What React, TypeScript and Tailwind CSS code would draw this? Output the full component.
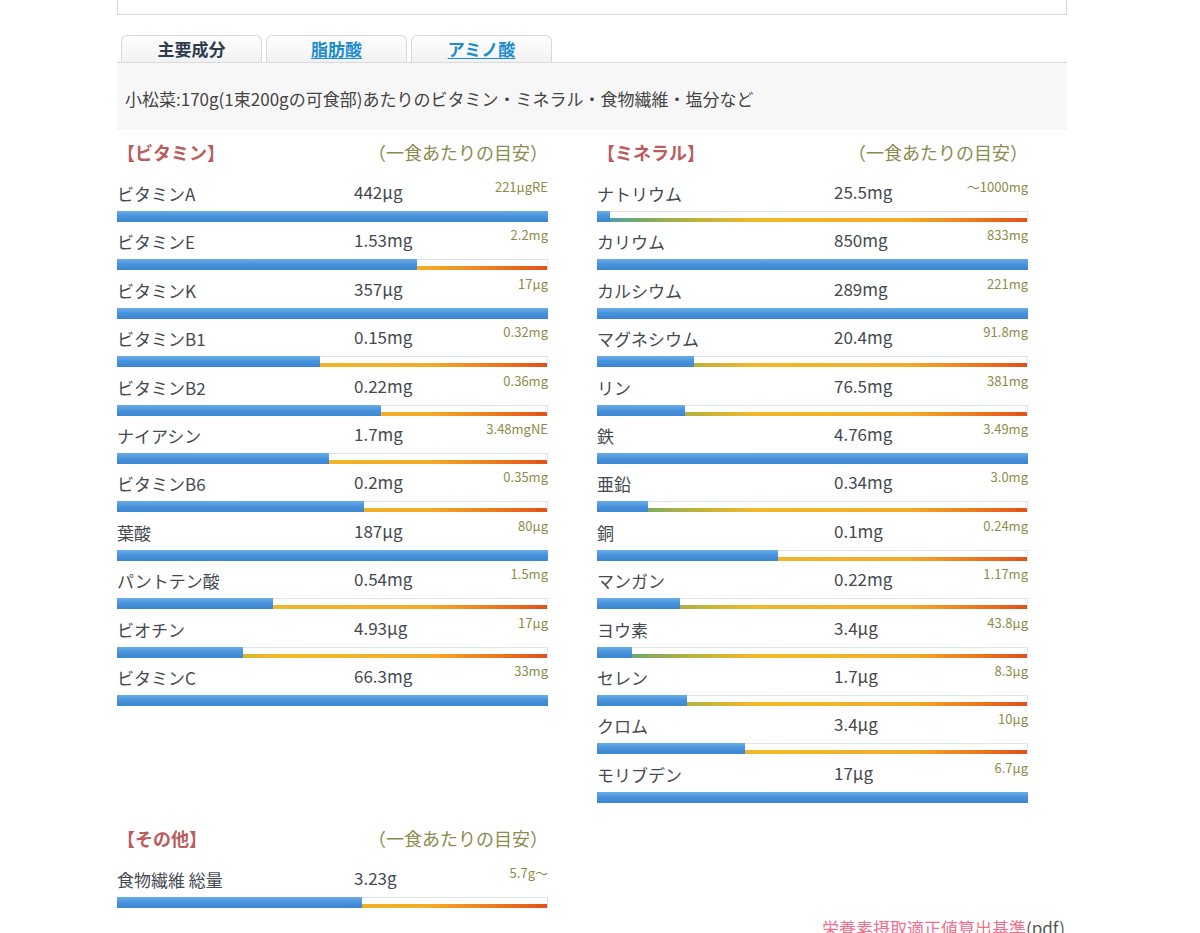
import React from 'react'

type Item = { name: string; value: string; target: string; ratio: number }

const vitamins: Item[] = [
  { name: 'ビタミンA', value: '442μg', target: '221μgRE', ratio: 442 / 221 },
  { name: 'ビタミンE', value: '1.53mg', target: '2.2mg', ratio: 1.53 / 2.2 },
  { name: 'ビタミンK', value: '357μg', target: '17μg', ratio: 357 / 17 },
  { name: 'ビタミンB1', value: '0.15mg', target: '0.32mg', ratio: 0.15 / 0.32 },
  { name: 'ビタミンB2', value: '0.22mg', target: '0.36mg', ratio: 0.22 / 0.36 },
  { name: 'ナイアシン', value: '1.7mg', target: '3.48mgNE', ratio: 1.7 / 3.48 },
  { name: 'ビタミンB6', value: '0.2mg', target: '0.35mg', ratio: 0.2 / 0.35 },
  { name: '葉酸', value: '187μg', target: '80μg', ratio: 187 / 80 },
  { name: 'パントテン酸', value: '0.54mg', target: '1.5mg', ratio: 0.54 / 1.5 },
  { name: 'ビオチン', value: '4.93μg', target: '17μg', ratio: 4.93 / 17 },
  { name: 'ビタミンC', value: '66.3mg', target: '33mg', ratio: 66.3 / 33 },
]

const minerals: Item[] = [
  { name: 'ナトリウム', value: '25.5mg', target: '〜1000mg', ratio: 25.5 / 1000 },
  { name: 'カリウム', value: '850mg', target: '833mg', ratio: 850 / 833 },
  { name: 'カルシウム', value: '289mg', target: '221mg', ratio: 289 / 221 },
  { name: 'マグネシウム', value: '20.4mg', target: '91.8mg', ratio: 20.4 / 91.8 },
  { name: 'リン', value: '76.5mg', target: '381mg', ratio: 76.5 / 381 },
  { name: '鉄', value: '4.76mg', target: '3.49mg', ratio: 4.76 / 3.49 },
  { name: '亜鉛', value: '0.34mg', target: '3.0mg', ratio: 0.34 / 3.0 },
  { name: '銅', value: '0.1mg', target: '0.24mg', ratio: 0.1 / 0.24 },
  { name: 'マンガン', value: '0.22mg', target: '1.17mg', ratio: 0.22 / 1.17 },
  { name: 'ヨウ素', value: '3.4μg', target: '43.8μg', ratio: 3.4 / 43.8 },
  { name: 'セレン', value: '1.7μg', target: '8.3μg', ratio: 1.7 / 8.3 },
  { name: 'クロム', value: '3.4μg', target: '10μg', ratio: 3.4 / 10 },
  { name: 'モリブデン', value: '17μg', target: '6.7μg', ratio: 17 / 6.7 },
]

const others: Item[] = [
  { name: '食物繊維 総量', value: '3.23g', target: '5.7g〜', ratio: 3.23 / 5.7 },
]

const Bar = ({ ratio }: { ratio: number }) => (
  <div className="relative h-[11px] w-full border-x border-t border-[#dde4ec] bg-white">
    <div className="absolute inset-x-0 bottom-0 h-[4px] bg-[linear-gradient(to_right,#3f9bc4_0%,#78aa66_10%,#b9b23c_22%,#f0b82a_36%,#f3ac26_72%,#ea6c1c_92%,#e2501a_100%)]" />
    <div
      className="absolute -left-px -top-px bottom-0 bg-[linear-gradient(to_bottom,#69aeea_0%,#4a93db_45%,#3b86d2_100%)]"
      style={{ width: `calc(${Math.min(1, ratio) * 100}% + 2px)` }}
    />
  </div>
)

const Row = ({ item }: { item: Item }) => (
  <div className="h-[48.4px]">
    <div className="flex h-[24px] items-start text-[#454a50]">
      <span className="w-[237px] text-[17px] leading-[24px]">{item.name}</span>
      <span className="-mt-[2px] text-[17px] leading-[24px]">{item.value}</span>
      <span className="-mt-[3px] ml-auto text-[13px] leading-[16px] text-[#8c8c4a]">{item.target}</span>
    </div>
    <div className="mt-[5px]">
      <Bar ratio={item.ratio} />
    </div>
  </div>
)

const Section = ({ title, items }: { title: string; items: Item[] }) => (
  <div className="w-[431px]">
    <div className="flex h-[24px] items-center justify-between">
      <span className="text-[18px] font-bold leading-[24px] text-[#bb5d5d]">{title}</span>
      <span className="text-[18px] leading-[24px] text-[#8b8b4e]">（一食あたりの目安）</span>
    </div>
    <div className="mt-[18px]">
      {items.map((item) => (
        <Row key={item.name} item={item} />
      ))}
    </div>
  </div>
)

export default function App() {
  return (
    <div className="h-[933px] w-[1200px] overflow-hidden bg-white font-['Noto_Sans_CJK_JP',sans-serif]">
      <div className="ml-[117px] w-[950px]">
        {/* box above, cut by the top edge */}
        <div className="h-[15px] border-x border-b border-[#d9d9d9]" />

        {/* tabs */}
        <div className="mt-[20px] flex gap-1 pl-1">
          <div className="flex h-[27px] w-[141px] items-center justify-center rounded-t-md border border-b-0 border-[#d8d8d8] bg-[linear-gradient(to_bottom,#ffffff,#f1f1f1)] text-[17px] font-bold text-[#2f3e4e]">
            主要成分
          </div>
          <div className="flex h-[27px] w-[141px] items-center justify-center rounded-t-md border border-b-0 border-[#d8d8d8] bg-[linear-gradient(to_bottom,#ffffff,#f1f1f1)] text-[17px] font-bold text-[#1d8ccc] underline underline-offset-2">
            脂肪酸
          </div>
          <div className="flex h-[27px] w-[141px] items-center justify-center rounded-t-md border border-b-0 border-[#d8d8d8] bg-[linear-gradient(to_bottom,#ffffff,#f1f1f1)] text-[17px] font-bold text-[#1d8ccc] underline underline-offset-2">
            アミノ酸
          </div>
        </div>

        {/* description panel */}
        <div className="h-[68px] border-t border-[#dcdcdc] bg-[#f7f7f7] pl-2 pt-[25px] text-[17px] leading-[22px] text-[#444]">
          小松菜:170g(1束200gの可食部)あたりのビタミン・ミネラル・食物繊維・塩分など
        </div>

        <div className="mt-[10px] flex gap-[49px]">
          <Section title="【ビタミン】" items={vitamins} />
          <Section title="【ミネラル】" items={minerals} />
        </div>

        <div className="mt-[15px]">
          <Section title="【その他】" items={others} />
        </div>

        <div className="flex justify-end pr-[2px] text-[17px] leading-[24px]">
          <span className="text-[#f0708e]">栄養素摂取適正値算出基準</span>
          <span className="text-[#555]">(pdf)</span>
        </div>
      </div>
    </div>
  )
}
